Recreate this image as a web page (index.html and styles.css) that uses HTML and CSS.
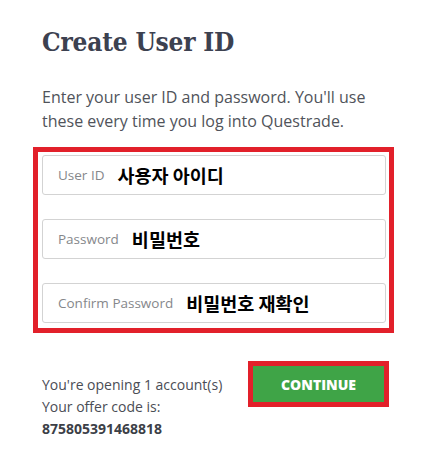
FILE: index.html
```html
<!DOCTYPE html>
<html lang="en">
<head>
    <meta charset="UTF-8">
    <meta name="viewport" content="width=device-width, initial-scale=1.0">
    <title>Create User ID</title>
    <link rel="stylesheet" href="styles.css">
</head>
<body>
    <div class="page">
        <h1 class="title">Create User ID</h1>
        <p class="intro">Enter your user ID and password. You'll use these every time you log into Questrade.</p>

        <div class="highlight fields">
            <div class="field">
                <span class="label">User ID</span>
                <span class="note">사용자 아이디</span>
            </div>
            <div class="field">
                <span class="label">Password</span>
                <span class="note">비밀번호</span>
            </div>
            <div class="field">
                <span class="label">Confirm Password</span>
                <span class="note">비밀번호 재확인</span>
            </div>
        </div>

        <div class="footer">
            <div class="summary">
                <div>You're opening 1 account(s)</div>
                <div>Your offer code is:</div>
                <div class="code">875805391468818</div>
            </div>
            <div class="highlight action">
                <button class="continue">CONTINUE</button>
            </div>
        </div>
    </div>
</body>
</html>
```

FILE: styles.css
```css
body {
    margin: 0;
    background-color: #fff;
    font-family: "Open Sans", "Noto Sans", sans-serif;
    color: #4a4d55;
}
.page {
    width: 361px;
    padding: 22px 0 0 33px;
}
.title {
    margin: 0 0 0 9px;
    font-family: "DejaVu Serif", serif;
    font-stretch: condensed;
    font-weight: bold;
    font-size: 26px;
    line-height: 40px;
    color: #3c4150;
    letter-spacing: -0.2px;
}
.intro {
    margin: 23px 0 0 9px;
    font-size: 16px;
    line-height: 24px;
    color: #50535a;
}
.highlight {
    border: 5px solid #e2202a;
}
.fields {
    margin-top: 14px;
    padding: 3px 3px 5px 4px;
    display: flex;
    flex-direction: column;
    gap: 24px;
}
.field {
    height: 38px;
    border: 1px solid #d3d3d3;
    border-radius: 3px;
    display: flex;
    align-items: center;
    padding-left: 15px;
    gap: 13px;
}
.label {
    font-size: 13.5px;
    color: #85878b;
}
.note {
    font-family: "Noto Sans CJK KR", sans-serif;
    font-weight: bold;
    font-size: 18.5px;
    color: #000;
}
.footer {
    display: flex;
    justify-content: space-between;
    align-items: flex-start;
    margin-top: 28px;
    padding-left: 9px;
    padding-right: 5px;
}
.summary {
    font-size: 14px;
    line-height: 22px;
    margin-top: 13px;
    color: #4a4d55;
}
.code {
    font-weight: bold;
    color: #3c3f47;
}
.action {
    display: flex;
}
.continue {
    width: 131px;
    height: 36px;
    border: none;
    background-color: #3fa447;
    color: #fff;
    font-family: "Open Sans", sans-serif;
    font-weight: 800;
    font-size: 14px;
    cursor: pointer;
}
```
